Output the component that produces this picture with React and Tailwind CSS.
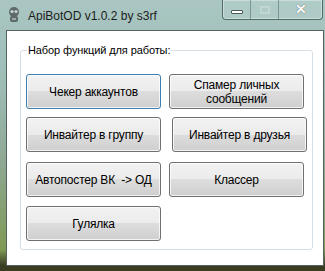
import React from 'react';

const font = { fontFamily: '"Liberation Sans", Arial, sans-serif' };

const WinButton = ({ children, focused, className = '' }) => (
  <div
    className={`h-[35px] w-[135px] flex items-center justify-center text-center rounded-[3px] border text-[12px] leading-[14px] tracking-[-0.2px] text-black bg-[linear-gradient(to_bottom,#f2f2f2_0%,#ebebeb_50%,#dddddd_50%,#cfcfcf_100%)] ${
      focused ? 'border-[#3c7fb1]' : 'border-[#707070]'
    } shadow-[inset_0_0_0_1px_rgba(255,255,255,0.75)] ${className}`}
  >
    {children}
  </div>
);

const TitleIcon = () => (
  <svg width="12" height="17" viewBox="0 0 12 17">
    <ellipse cx="6" cy="6" rx="5" ry="5" fill="#5e6a6a" />
    <circle cx="4" cy="5.5" r="1.6" fill="#c9d3d2" />
    <circle cx="8" cy="5.5" r="1.6" fill="#c9d3d2" />
    <rect x="2" y="10" width="8" height="6" rx="2" fill="#5e6a6a" />
    <rect x="4" y="12" width="4" height="2" fill="#9aa8a7" />
  </svg>
);

export default function App() {
  return (
    <div
      className="w-[325px] h-[271px] overflow-hidden flex flex-col bg-[linear-gradient(to_bottom,#a9c6c2_0%,#9fbdb7_30%,#8ea893_60%,#7f9a55_92%,#3a3d22_98%)]"
      style={font}
    >
      {/* title bar */}
      <div className="h-[30px] flex items-start relative">
        <div className="mt-[6px] ml-[8px]">
          <TitleIcon />
        </div>
        <div className="ml-[8px] mt-[7px] text-[12px] text-[#1c1c1c]">ApiBotOD v1.0.2 by s3rf</div>
        <div className="absolute top-0 left-[222px] flex h-[20px] rounded-b-[4px] border border-t-0 border-[#4f6e6a] bg-[rgba(190,215,212,0.35)] shadow-[inset_0_0_0_1px_rgba(255,255,255,0.35)]">
          <div className="w-[28px] flex items-center justify-center border-r border-[#7b9895]">
            <div className="w-[12px] h-[4px] bg-white border border-[#4a5a58] rounded-[1px] mt-[4px]" />
          </div>
          <div className="w-[28px] flex items-center justify-center border-r border-[#7b9895]">
            <div className="w-[10px] h-[8px] border-2 border-[#c5d8d5] opacity-80" />
          </div>
          <div className="w-[43px] flex items-center justify-center text-white text-[14px] font-bold [text-shadow:0_0_1px_#333]">
            ✕
          </div>
        </div>
      </div>

      {/* client area */}
      <div className="ml-[6px] mr-[1px] h-[236px] border border-[#52625f] bg-white">
        <div className="relative ml-[13px] mt-[19px] w-[293px] h-[200px] border border-[#d5dfe5] rounded-[3px] pl-[5px] pt-[23px]">
          <div className="absolute left-[6px] top-[-8px] bg-white px-[1px] text-[11px] leading-[14px] tracking-[-0.1px] text-black">
            Набор функций для работы:
          </div>
          <div className="flex gap-[8px]">
            <WinButton focused>Чекер аккаунтов</WinButton>
            <WinButton>
              Спамер личных
              <br />
              сообщений
            </WinButton>
          </div>
          <div className="flex gap-[8px] mt-[8px]">
            <WinButton>Инвайтер в группу</WinButton>
            <WinButton className="ml-[3px]">Инвайтер в друзья</WinButton>
          </div>
          <div className="flex gap-[8px] mt-[10px]">
            <WinButton>Автопостер ВК&nbsp; -&gt; ОД</WinButton>
            <WinButton>Классер</WinButton>
          </div>
          <div className="flex gap-[8px] mt-[9px]">
            <WinButton>Гулялка</WinButton>
          </div>
        </div>
      </div>
    </div>
  );
}
